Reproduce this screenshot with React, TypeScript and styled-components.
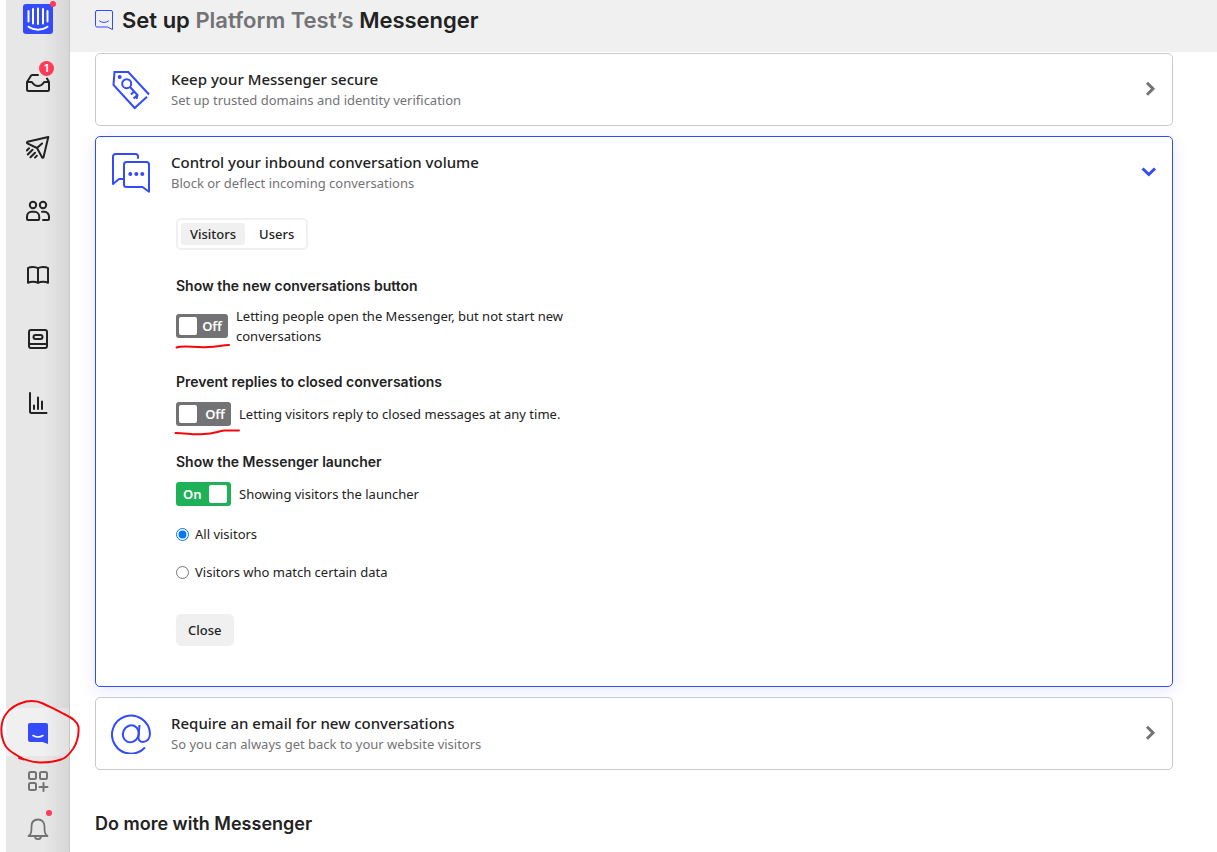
import React, { useState } from "react";
import styled, { createGlobalStyle, css } from "styled-components";

const ink = "#222222";
const muted = "#737376";
const blue = "#334bfa";
const line = "#c9c9cb";
const bodyFont = '"Noto Sans", "Open Sans", sans-serif';
const headFont = 'Inter, "Liberation Sans", sans-serif';

const GlobalStyle = createGlobalStyle`
  *, *::before, *::after { box-sizing: border-box; }
  body { margin: 0; background: #fff; color: ${ink}; font: 14px/20px ${bodyFont}; }
  h1, h2, h3, p { margin: 0; }
  button { font: inherit; color: inherit; border: 0; background: none; padding: 0; cursor: pointer; }
`;

const Page = styled.div`
  display: flex;
  min-height: 100vh;
  padding-left: 6px;
`;

const Sidebar = styled.nav`
  position: sticky;
  top: 0;
  z-index: 1;
  flex: none;
  display: flex;
  flex-direction: column;
  justify-content: space-between;
  width: 64px;
  height: 100vh;
  border-right: 1px solid #c8c8c8;
  background: linear-gradient(to right, #e7e7e7 60%, #d7d7d7);
`;

const NavGroup = styled.div`
  display: flex;
  flex-direction: column;
`;

const NavItem = styled.a<{ $height: number; $active?: boolean; $quiet?: boolean }>`
  position: relative;
  display: flex;
  align-items: center;
  justify-content: center;
  height: ${(p) => p.$height}px;
  color: ${(p) => (p.$quiet ? muted : ink)};
  background: ${(p) => (p.$active ? "linear-gradient(to right, #f0f0f0 60%, #e0e0e0)" : "none")};
`;

const LogoLink = styled(NavItem)`
  align-items: flex-start;
  padding-top: 4px;
`;

const Icon = styled.svg`
  display: block;
  flex: none;
  fill: none;
  stroke: currentColor;
  stroke-width: 2;
  stroke-linecap: round;
  stroke-linejoin: round;
`;

const SharpIcon = styled(Icon)`
  stroke-linecap: butt;
  stroke-linejoin: miter;
`;

const ChevronIcon = styled(SharpIcon)`
  stroke-width: 3;
`;

const FineIcon = styled(Icon)`
  stroke-width: 1;
`;

const Dot = styled.span<{ $top: number }>`
  position: absolute;
  top: ${(p) => p.$top}px;
  left: 40px;
  width: 6px;
  height: 6px;
  border-radius: 50%;
  background: #fd3a57;
`;

const LogoDot = styled(Dot)`
  left: 44px;
`;

const Badge = styled.span`
  position: absolute;
  top: 10px;
  left: 33px;
  width: 15px;
  height: 15px;
  border-radius: 50%;
  background: #fd3a57;
  color: #fff;
  font: 700 10px/15px ${headFont};
  text-align: center;
`;

const Marker = styled.svg`
  position: absolute;
  fill: none;
  stroke: #f5060d;
  stroke-width: 2;
  stroke-linecap: round;
  stroke-linejoin: round;
  pointer-events: none;
`;

const CircleMarker = styled(Marker)`
  top: -9px;
  left: -6px;
`;

const UnderlineMarker = styled(Marker)`
  top: 26px;
  left: -2px;
`;

const Main = styled.main`
  flex: 1;
  min-width: 0;
`;

const Header = styled.header`
  display: flex;
  align-items: flex-start;
  gap: 9px;
  height: 52px;
  padding: 6px 25px;
  background: #f0f0f0;
  svg {
    margin-top: 3px;
    color: ${blue};
  }
`;

const Title = styled.h1`
  font: 600 22px/28px ${headFont};
  span { color: ${muted}; }
`;

const Content = styled.div`
  display: flex;
  flex-direction: column;
  gap: 10px;
  padding: 1px 44px 0 25px;
`;

const Card = styled.section<{ $open?: boolean }>`
  border: 1px solid ${line};
  border-radius: 5px;
  background: #fff;
  ${(p) =>
    p.$open &&
    css`
      border-color: ${blue};
      box-shadow: 0 4px 16px rgba(51, 75, 250, 0.12);
    `}
`;

const CardHeader = styled.button<{ $open?: boolean }>`
  display: flex;
  align-items: center;
  gap: 20px;
  width: 100%;
  padding: 15px;
  text-align: left;
  > svg { color: ${blue}; }
  > svg:last-child { color: ${(p) => (p.$open ? blue : muted)}; }
`;

const CardText = styled.span`
  flex: 1;
  display: flex;
  flex-direction: column;
`;

const CardTitle = styled.span`
  font-size: 15px;
  font-weight: 500;
  line-height: 21px;
`;

const CardNote = styled.span`
  font-size: 13px;
  line-height: 20px;
  color: ${muted};
`;

const CardBody = styled.div`
  display: flex;
  flex-direction: column;
  align-items: flex-start;
  gap: 26px;
  padding: 10px 80px 40px;
`;

const Tabs = styled.div`
  display: flex;
  gap: 5px;
  padding: 3px;
  border: 2px solid #f0f0f0;
  border-radius: 5px;
`;

const Tab = styled.button<{ $active: boolean }>`
  height: 22px;
  padding: 0 9px;
  border-radius: 3px;
  font-size: 13px;
  font-weight: 500;
  line-height: 22px;
  background: ${(p) => (p.$active ? "#f0f0f0" : "transparent")};
`;

const Setting = styled.div`
  display: flex;
  flex-direction: column;
  gap: 10px;
  max-width: 400px;
`;

const SettingTitle = styled.h3`
  font: 600 14px/20px ${headFont};
`;

const SettingRow = styled.div`
  display: flex;
  align-items: center;
  gap: 8px;
  font-size: 13px;
`;

const SwitchWrap = styled.div`
  position: relative;
  flex: none;
`;

const Switch = styled.button<{ $on: boolean; $compact?: boolean }>`
  display: flex;
  flex-direction: ${(p) => (p.$on ? "row-reverse" : "row")};
  align-items: center;
  justify-content: space-between;
  width: ${(p) => (p.$compact ? 52 : 55)}px;
  height: 24px;
  padding: ${(p) => (p.$on ? "3px 4px 3px 7px" : "3px 6px 3px 3px")};
  border-radius: 3px;
  background: ${(p) => (p.$on ? "#1fb157" : muted)};
  color: #fff;
  font: 600 13px/18px ${bodyFont};
  &::before {
    content: "";
    width: 18px;
    height: 18px;
    border-radius: 2px;
    background: #fff;
  }
`;

const LauncherGroup = styled.div`
  display: flex;
  flex-direction: column;
  gap: 18px;
`;

const Choice = styled.label`
  display: flex;
  align-items: center;
  gap: 6px;
  font-size: 13px;
  line-height: 20px;
  input {
    width: 13px;
    height: 13px;
    margin: 0;
    accent-color: #0075ff;
  }
`;

const CloseButton = styled.button`
  height: 32px;
  margin-top: 6px;
  padding: 0 12px;
  border-radius: 5px;
  background: #f0f0f0;
  font-size: 13px;
  font-weight: 500;
`;

const MoreTitle = styled.h2`
  margin-top: 32px;
  font: 600 18px/24px ${headFont};
`;

function Logo() {
  return (
    <Icon width="30" height="30" viewBox="0 0 30 30">
      <rect width="30" height="30" rx="3" fill={blue} stroke="none" />
      <path
        stroke="#fff"
        d="M5.500 7v10.500M10 5v14.500M15 4.500v15.500M20 5v14.500M24.500 7v10.500M5.500 22.800C10.500 26.600 19.500 26.600 24.500 22.800"
      />
    </Icon>
  );
}

const navIcons = [
  {
    label: "Inbox",
    badge: "1",
    art: (
      <path d="M1 11h4.500c1.200 0 1.500 4 6.500 4s5.300-4 6.500-4H23v7.500a1.500 1.500 0 0 1-1.500 1.500h-19A1.500 1.500 0 0 1 1 18.500zL5 4.800Q5.500 4 6.500 4H12M21 7.500L23 11" />
    ),
  },
  {
    label: "Outbound",
    art: (
      <path d="M22.300 2L1.500 6.800Q.500 7.500 1.300 8.300L11 13L16.200 22.500Q17 23.300 17.500 22.300zM11 13L16 8.500M3 13.300L.800 15.500M6.500 14.800L1.800 19.500M9 17.800L4.500 22.300M10.800 20.800L9 22.600" />
    ),
  },
  {
    label: "People",
    art: (
      <>
        <circle cx="7" cy="6" r="3.200" />
        <circle cx="17" cy="6" r="3.200" />
        <path d="M5.500 12.800h3a4.800 4.800 0 0 1 4.700 4.700v2.500a1 1 0 0 1-1 1H2a1 1 0 0 1-1-1v-2.500a4.800 4.800 0 0 1 4.500-4.700zM16 12.800h2.500a4.600 4.600 0 0 1 4.500 4.700v2.500a1 1 0 0 1-1 1H17" />
      </>
    ),
  },
  {
    label: "Articles",
    art: (
      <path d="M12 5.300C9.500 3.500 4.500 3.500 2 5v14.800C4.500 18.500 9.500 18.500 12 20c2.500-1.500 7.500-1.500 10-.2V5C19.500 3.500 14.500 3.500 12 5.300zV20" />
    ),
  },
  {
    label: "Resources",
    art: (
      <>
        <rect x="3" y="3" width="18" height="18" rx="2" />
        <rect x="7.500" y="8" width="9" height="4" rx="2" />
        <path d="M3 17h18" />
      </>
    ),
  },
  { label: "Reports", art: <path d="M4 2v18.500Q4 22 5.500 22H20.500M8 14.500v3.500M12 6.500v11.500M16 10.500v7.500" /> },
];

function NavIcon({ children }: { children: React.ReactNode }) {
  return (
    <Icon width="24" height="24" viewBox="0 0 24 24">
      {children}
    </Icon>
  );
}

function Chevron({ down }: { down?: boolean }) {
  return (
    <ChevronIcon width="16" height="16" viewBox="0 0 16 16">
      <path d={down ? "M1.500 3.500L7.800 9.500L14 3.500" : "M6 .800L12 6.800L6 12.800"} />
    </ChevronIcon>
  );
}

const TagArt = (
  <SharpIcon width="40" height="40" viewBox="0 0 40 40">
    <path d="M38 24.500L17.300 2H3.500L2.500 15L23.700 38L36 26.700" />
    <circle cx="8.700" cy="7" r="2" fill="currentColor" stroke="none" />
    <circle cx="15.700" cy="13.700" r="4.500" />
    <path d="M19 17L26.500 25L25.500 29M26.500 25L22.500 28.500M23 21.500L20 24.500" />
  </SharpIcon>
);

const ChatArt = (
  <Icon width="40" height="40" viewBox="0 0 40 40">
    <path d="M27 5V3.500A2.500 2.500 0 0 0 24.500 1H4.500A2.500 2.500 0 0 0 2 3.500V31L8 26H12" />
    <path d="M15.500 9H35.500A2.500 2.500 0 0 1 38 11.500V38.800L31.500 34H15.500A2.500 2.500 0 0 1 13 31.500V11.500A2.500 2.500 0 0 1 15.500 9z" />
    <g fill="currentColor" stroke="none">
      <circle cx="19.300" cy="21" r="2" />
      <circle cx="25.300" cy="21" r="2" />
      <circle cx="31.300" cy="21" r="2" />
    </g>
  </Icon>
);

const AtArt = (
  <SharpIcon width="40" height="40" viewBox="0 0 40 40">
    <path d="M34 33.500A19 19 0 1 1 39 19.500C39 24.500 36 28 32 28C29 28 27.300 26 27.500 23L28.500 11" />
    <ellipse cx="19.800" cy="19.800" rx="7.800" ry="8.600" transform="rotate(25 19.800 19.800)" />
  </SharpIcon>
);

interface PanelProps {
  art: React.ReactNode;
  title: string;
  note: string;
  open?: boolean;
  children?: React.ReactNode;
}

function Panel({ art, title, note, open, children }: PanelProps) {
  return (
    <Card $open={open}>
      <CardHeader type="button" aria-expanded={!!open} $open={open}>
        {art}
        <CardText>
          <CardTitle>{title}</CardTitle>
          <CardNote>{note}</CardNote>
        </CardText>
        <Chevron down={open} />
      </CardHeader>
      {children}
    </Card>
  );
}

interface ToggleProps {
  id: string;
  title: string;
  note: string;
  initial?: boolean;
  compact?: boolean;
  underline?: string;
}

function ToggleSetting({ id, title, note, initial = false, compact, underline }: ToggleProps) {
  const [on, setOn] = useState(initial);
  return (
    <Setting>
      <SettingTitle id={id}>{title}</SettingTitle>
      <SettingRow>
        <SwitchWrap>
          <Switch
            type="button"
            role="switch"
            aria-checked={on}
            aria-labelledby={id}
            $on={on}
            $compact={compact}
            onClick={() => setOn(!on)}
          >
            {on ? "On" : "Off"}
          </Switch>
          {underline && (
            <UnderlineMarker width="68" height="10" viewBox="0 0 68 10">
              <path d={underline} />
            </UnderlineMarker>
          )}
        </SwitchWrap>
        <p>{note}</p>
      </SettingRow>
    </Setting>
  );
}

export default function App() {
  const [tab, setTab] = useState("Visitors");
  const [audience, setAudience] = useState("All visitors");

  return (
    <>
      <GlobalStyle />
      <Page>
        <Sidebar aria-label="Main">
          <NavGroup>
            <LogoLink href="#home" aria-label="Home" $height={51}>
              <Logo />
              <LogoDot $top={1} />
            </LogoLink>
            {navIcons.map((item) => (
              <NavItem key={item.label} href={`#${item.label.toLowerCase()}`} aria-label={item.label} $height={64}>
                <NavIcon>{item.art}</NavIcon>
                {item.badge && <Badge>{item.badge}</Badge>}
              </NavItem>
            ))}
          </NavGroup>
          <NavGroup>
            <NavItem href="#messenger" aria-label="Messenger" $height={48} $active>
              <NavIcon>
                <path d="M4 3h16a2 2 0 0 1 2 2v19L16.500 22H4a2 2 0 0 1-2-2V5a2 2 0 0 1 2-2z" fill={blue} stroke="none" />
                <path d="M7 15.500Q12 18.500 17 15.500" stroke="#fff" strokeWidth="1.500" />
              </NavIcon>
              <CircleMarker width="82" height="68" viewBox="0 0 82 68">
                <path d="M19 59L24 60.500M26 2.500C32 1.500 38 2 43 4.500C50 8 57 11 64 15C72 19 77 22 78.500 28C79 36 77 44 73 50C69 55 67 59 61 60.500C54 63 47 63.500 40 63.500C32 63 24 61 18 57C12 53 7 51 5 46C2 40 1 34 1.500 28C2 22 3 19 6 15C10 9 17 5 26 2.500" />
              </CircleMarker>
            </NavItem>
            <NavItem href="#apps" aria-label="Apps" $height={48} $quiet>
              <NavIcon>
                <rect x="3" y="4" width="7" height="7" rx="1.500" />
                <rect x="14" y="4" width="7" height="7" rx="1.500" />
                <rect x="3" y="15" width="7" height="7" rx="1.500" />
                <path d="M17.500 15v8M13.500 19h8" />
              </NavIcon>
            </NavItem>
            <NavItem href="#notifications" aria-label="Notifications" $height={48} $quiet>
              <NavIcon>
                <path d="M2.500 20H21.500C18.500 18 18.500 15.500 18.500 10.500C18.500 6 16 3.500 12 3.500S5.500 6 5.500 10.500C5.500 15.500 5.500 18 2.500 20zM9 20.500C9.500 24 14.500 24 15 20.500" strokeWidth="1.800" />
              </NavIcon>
              <Dot $top={6} />
            </NavItem>
          </NavGroup>
        </Sidebar>
        <Main>
          <Header>
            <FineIcon width="18" height="22" viewBox="0 0 18 22">
              <path d="M2 1.500H16A1.500 1.500 0 0 1 17.500 3V20.500L12.500 18H2A1.500 1.500 0 0 1 .500 16.500V3A1.500 1.500 0 0 1 2 1.500zM4.500 12Q9 15 13.500 12" />
            </FineIcon>
            <Title>
              Set up <span>Platform Test’s</span> Messenger
            </Title>
          </Header>
          <Content>
            <Panel art={TagArt} title="Keep your Messenger secure" note="Set up trusted domains and identity verification" />
            <Panel
              open
              art={ChatArt}
              title="Control your inbound conversation volume"
              note="Block or deflect incoming conversations"
            >
              <CardBody>
                <Tabs role="tablist">
                  {["Visitors", "Users"].map((name) => (
                    <Tab key={name} type="button" role="tab" aria-selected={tab === name} $active={tab === name} onClick={() => setTab(name)}>
                      {name}
                    </Tab>
                  ))}
                </Tabs>
                <ToggleSetting
                  id="new-conversations"
                  title="Show the new conversations button"
                  note="Letting people open the Messenger, but not start new conversations"
                  compact
                  underline="M2.500 7.500C10 5 22 8 34 7C44 7 47 5 55 5"
                />
                <ToggleSetting
                  id="prevent-replies"
                  title="Prevent replies to closed conversations"
                  note="Letting visitors reply to closed messages at any time."
                  underline="M1.500 5C12 5 20 7 30 6C40 6 44 3 50 2.500H65"
                />
                <LauncherGroup role="radiogroup" aria-labelledby="launcher">
                  <ToggleSetting id="launcher" title="Show the Messenger launcher" note="Showing visitors the launcher" initial />
                  {["All visitors", "Visitors who match certain data"].map((name) => (
                    <Choice key={name}>
                      <input type="radio" name="audience" checked={audience === name} onChange={() => setAudience(name)} />
                      {name}
                    </Choice>
                  ))}
                </LauncherGroup>
                <CloseButton type="button">Close</CloseButton>
              </CardBody>
            </Panel>
            <Panel art={AtArt} title="Require an email for new conversations" note="So you can always get back to your website visitors" />
            <MoreTitle>Do more with Messenger</MoreTitle>
          </Content>
        </Main>
      </Page>
    </>
  );
}
